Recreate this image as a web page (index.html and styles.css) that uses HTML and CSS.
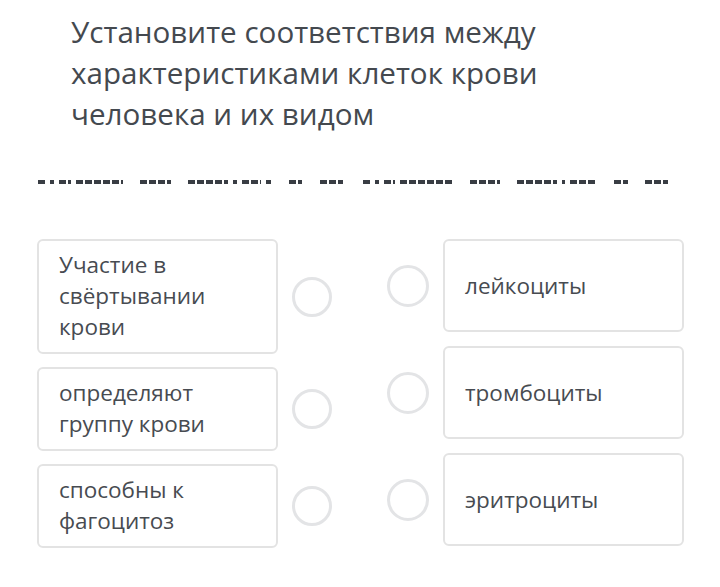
FILE: index.html
```html
<!DOCTYPE html>
<html lang="ru">
<head>
  <meta charset="UTF-8">
  <title>Установите соответствия</title>
  <link rel="stylesheet" href="styles.css">
</head>
<body>
  <div class="page">
    <h1 class="question">Установите соответствия между характеристиками клеток крови человека и их видом</h1>

    <!-- hidden instruction line, only a sliver visible -->
    <div class="hint">
      <div class="hint-half">
        <span class="seg" style="width: 8px"></span>
        <span class="seg" style="width: 4px"></span>
        <span class="seg" style="width: 13px"></span>
        <span class="seg" style="width: 52px"></span>
        <span class="gap"></span>
        <span class="seg" style="width: 34px"></span>
        <span class="gap"></span>
        <span class="seg" style="width: 45px"></span>
        <span class="seg" style="width: 4px"></span>
        <span class="seg" style="width: 21px"></span>
        <span class="seg" style="width: 6px"></span>
        <span class="gap"></span>
        <span class="seg" style="width: 15px"></span>
        <span class="gap"></span>
        <span class="seg" style="width: 26px"></span>
      </div>
      <div class="hint-half">
        <span class="seg" style="width: 8px"></span>
        <span class="seg" style="width: 4px"></span>
        <span class="seg" style="width: 13px"></span>
        <span class="seg" style="width: 60px"></span>
        <span class="gap"></span>
        <span class="seg" style="width: 34px"></span>
        <span class="gap"></span>
        <span class="seg" style="width: 45px"></span>
        <span class="seg" style="width: 4px"></span>
        <span class="seg" style="width: 30px"></span>
        <span class="gap"></span>
        <span class="seg" style="width: 16px"></span>
        <span class="gap"></span>
        <span class="seg" style="width: 26px"></span>
      </div>
    </div>

    <div class="match">
      <!-- left column: characteristics -->
      <div class="column">
        <div class="row">
          <div class="card card-left">Участие в свёртывании крови</div>
          <span class="dot"></span>
        </div>
        <div class="row">
          <div class="card card-left">определяют группу крови</div>
          <span class="dot"></span>
        </div>
        <div class="row">
          <div class="card card-left">способны к фагоцитоз</div>
          <span class="dot"></span>
        </div>
      </div>

      <!-- right column: cell types -->
      <div class="column">
        <div class="row">
          <span class="dot dot-right"></span>
          <div class="card card-right">лейкоциты</div>
        </div>
        <div class="row">
          <span class="dot dot-right"></span>
          <div class="card card-right">тромбоциты</div>
        </div>
        <div class="row">
          <span class="dot dot-right"></span>
          <div class="card card-right">эритроциты</div>
        </div>
      </div>
    </div>
  </div>
</body>
</html>
```

FILE: styles.css
```css
body {
  font-family: 'Open Sans', 'Noto Sans', sans-serif;
  background: #fff;
  color: #454a50;
  margin: 0;
  padding: 0;
}
.page {
  width: 720px;
  height: 587px;
  overflow: hidden;
}
.question {
  margin: 0;
  padding: 11px 0 0 71px;
  width: 520px;
  font-size: 29.6px;
  font-weight: normal;
  line-height: 41px;
  color: #44494f;
}
.hint {
  display: flex;
  gap: 20px;
  margin: 46px 0 0 38px;
  height: 4px;
}
.hint-half {
  display: flex;
  gap: 5px;
  width: 305px;
}
.seg {
  height: 4px;
  background: repeating-linear-gradient(90deg, #393d44 0 7px, transparent 7px 9px);
}
.gap {
  width: 8px;
}
.match {
  display: flex;
  margin: 55px 0 0 37px;
  gap: 14px;
}
.column {
  display: flex;
  flex-direction: column;
  gap: 13px;
}
.column + .column {
  gap: 14px;
}
.row {
  display: flex;
  align-items: center;
  gap: 14px;
}
.card {
  box-sizing: border-box;
  width: 241px;
  border: 2px solid #e3e3e3;
  border-radius: 6px;
  font-size: 22.5px;
  line-height: 31px;
  color: #474b51;
}
.card-left {
  padding: 8px 20px 10px 20px;
}
.card-right {
  height: 93px;
  display: flex;
  align-items: center;
  padding: 0 20px;
}
.dot {
  box-sizing: border-box;
  width: 40px;
  height: 40px;
  border: 3px solid #e3e4e6;
  border-radius: 50%;
  flex-shrink: 0;
}
.dot-right {
  width: 42px;
  height: 42px;
  margin-left: 41px;
}
```
